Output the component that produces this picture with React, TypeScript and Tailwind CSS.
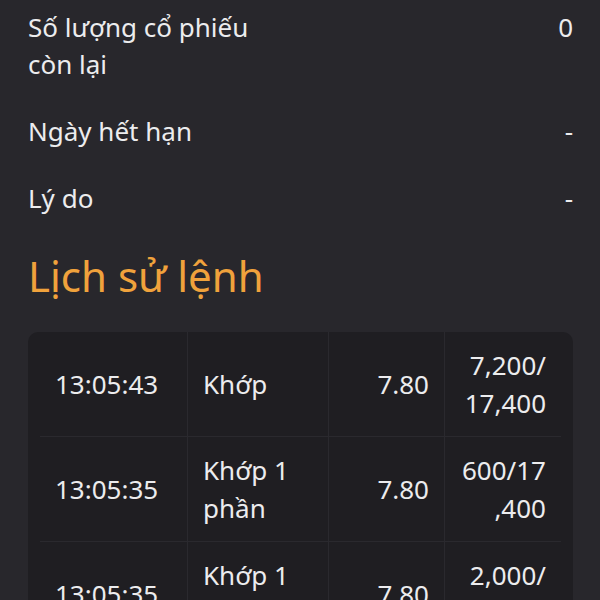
import React from "react";

const info = [
  { label: "Số lượng cổ phiếu còn lại", value: "0" },
  { label: "Ngày hết hạn", value: "-" },
  { label: "Lý do", value: "-" },
];

// qty is split where the app wraps it
const history = [
  { time: "13:05:43", status: "Khớp", price: "7.80", qty: ["7,200/", "17,400"] },
  { time: "13:05:35", status: "Khớp 1 phần", price: "7.80", qty: ["600/17", ",400"] },
  { time: "13:05:35", status: "Khớp 1 phần", price: "7.80", qty: ["2,000/", "17,400"] },
  { time: "13:05:20", status: "Đã đặt", price: "7.80", qty: ["0/17,400"] },
];

export default function App() {
  return (
    <div className="min-h-screen w-full bg-[#28272c] text-[#ececee] font-['Noto_Sans',sans-serif] overflow-hidden">
      <div className="pl-[28px] pr-[27px] pt-[9px]">
        <div className="flex flex-col gap-[30px]">
          {info.map((row) => (
            <div key={row.label} className="flex justify-between items-start text-[26px] leading-[37px]">
              <span className="w-[240px]">{row.label}</span>
              <span>{row.value}</span>
            </div>
          ))}
        </div>

        <h2 className="mt-[30px] text-[42px] leading-[57px] text-[#f0a23c]">Lịch sử lệnh</h2>

        <div className="mt-[28px] rounded-[10px] bg-[#1f1e22] px-3">
          {history.map((h, i) => (
            <div
              key={i}
              className="grid grid-cols-[148px_141px_116px_115px] border-b border-[#2a292e] text-[26px] leading-[38px]"
            >
              <div className="flex items-center px-[15px] py-[14px] border-r border-[#2a292e]">{h.time}</div>
              <div className="flex items-center px-[15px] py-[14px] border-r border-[#2a292e]">{h.status}</div>
              <div className="flex items-center justify-end px-[15px] py-[14px] border-r border-[#2a292e]">{h.price}</div>
              <div className="flex flex-col items-end justify-center px-[14px] py-[14px] whitespace-nowrap">
                {h.qty.map((line) => (
                  <span key={line}>{line}</span>
                ))}
              </div>
            </div>
          ))}
        </div>
      </div>
    </div>
  );
}
